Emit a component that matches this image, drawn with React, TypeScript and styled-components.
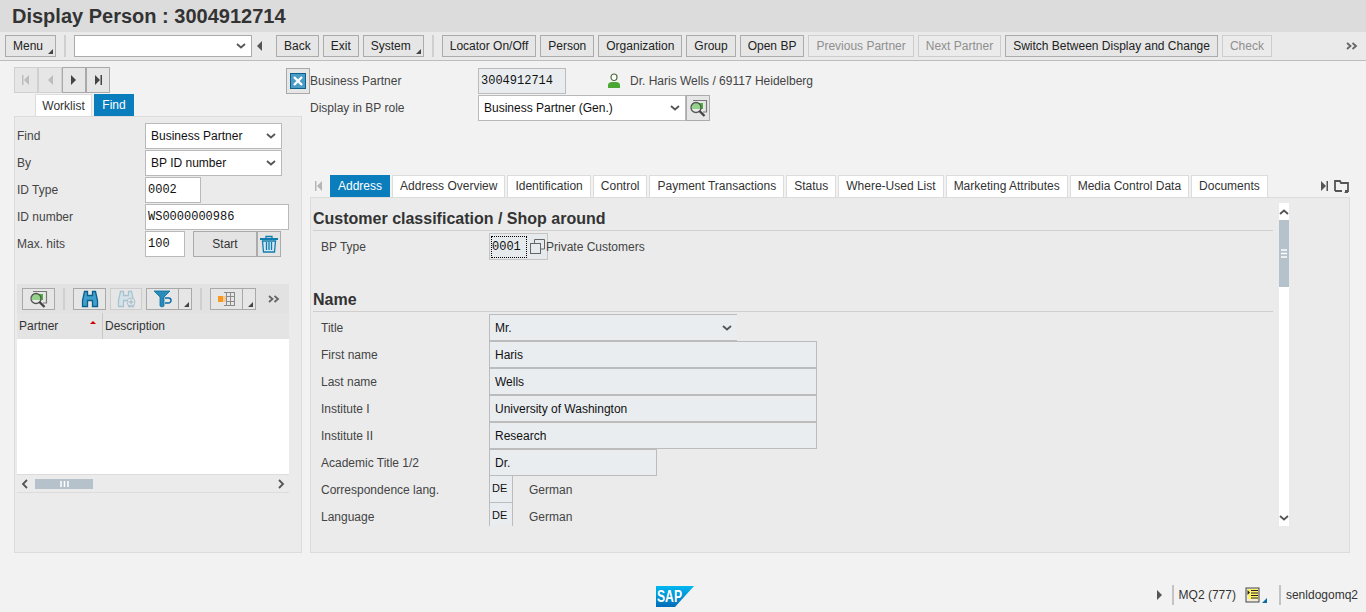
import React from "react";
import styled, { createGlobalStyle, css } from "styled-components";

const GlobalStyle = createGlobalStyle`
  html, body { margin: 0; padding: 0; height: 100%; overflow: hidden; background: #f2f2f2; }
  body { font-family: "Liberation Sans", Arial, sans-serif; font-size: 12px; color: #333; }
`;

const toolbarButtons = [
  { label: "Back" },
  { label: "Exit" },
  { label: "System", menu: true },
];
const appButtons = [
  { label: "Locator On/Off" },
  { label: "Person" },
  { label: "Organization" },
  { label: "Group" },
  { label: "Open BP" },
  { label: "Previous Partner", disabled: true },
  { label: "Next Partner", disabled: true },
  { label: "Switch Between Display and Change" },
  { label: "Check", disabled: true },
];
const tabs = [
  "Address",
  "Address Overview",
  "Identification",
  "Control",
  "Payment Transactions",
  "Status",
  "Where-Used List",
  "Marketing Attributes",
  "Media Control Data",
  "Documents",
];
const nameRows = [
  { label: "First name", value: "Haris", width: 328 },
  { label: "Last name", value: "Wells", width: 328 },
  { label: "Institute I", value: "University of Washington", width: 328 },
  { label: "Institute II", value: "Research", width: 328 },
  { label: "Academic Title 1/2", value: "Dr.", width: 168 },
];

const Chevron = () => (
  <svg width="10" height="6" viewBox="0 0 10 6">
    <path d="M1 1l4 3.500L9 1" fill="none" stroke="#555" strokeWidth="1.800" />
  </svg>
);

const SideChevron = ({ left }: { left?: boolean }) => (
  <svg width="10" height="10" viewBox="0 0 10 10">
    <path d={left ? "M7 1L3 5l4 4" : "M3 1l4 4-4 4"} fill="none" stroke="#555" strokeWidth="1.800" />
  </svg>
);

const DoubleChevron = () => (
  <svg width="13" height="8" viewBox="0 0 13 8">
    <path d="M1 1l3.500 3L1 7M6.500 1L10 4 6.500 7" fill="none" stroke="#666" strokeWidth="1.800" />
  </svg>
);

const SearchListIcon = () => (
  <svg width="19" height="18" viewBox="0 0 19 18">
    <path d="M4 1.500h13.500V13H14" fill="none" stroke="#777" strokeWidth="1.200" />
    <rect x="3" y="4" width="11" height="6" fill="#46b53a" />
    <circle cx="7" cy="8.500" r="5" fill="#f4f7f2" fillOpacity="0.45" stroke="#555" strokeWidth="1.300" />
    <path d="M10.500 12l5 5" stroke="#444" strokeWidth="2.400" />
  </svg>
);

const BinocularsIcon = ({ faded }: { faded?: boolean }) => {
  const line = faded ? "#a9c3d1" : "#0a5f8c";
  const fill = faded ? "#d5e2ea" : "#3f9fcb";
  return (
    <svg width="20" height="18" viewBox="0 0 20 18">
      <path
        d="M4.500 1.500h3v4h5v-4h3l2 9v6h-5v-6h-5v6h-5v-6z"
        fill={fill}
        stroke={line}
        strokeWidth="1.300"
      />
      {faded && (
        <>
          <circle cx="15" cy="12" r="4" fill="#e6e6e6" stroke={line} />
          <path d="M12.500 12h5M15 9.500v5" stroke={line} strokeWidth="1.400" />
        </>
      )}
    </svg>
  );
};

const FilterIcon = () => (
  <svg width="20" height="18" viewBox="0 0 20 18">
    <path d="M1 1h16l-6 6v9l-2 1-2-1V7z" fill="#2a8ab8" stroke="#0a6ea5" strokeWidth=".8" />
    <path d="M12 8h3.500a2 2 0 010 5H12" fill="none" stroke="#0a6ea5" strokeWidth="1.500" />
  </svg>
);

const LayoutIcon = () => (
  <svg width="18" height="16" viewBox="0 0 18 16">
    <path d="M6 1.500h11M6 5.500h11M6 10.500h11M6 14.500h11M8.500 1v14M12.500 1v14M16.500 1v14" stroke="#8a8a8a" strokeWidth="1" fill="none" />
    <rect x="0" y="5" width="5" height="6" fill="#f59a1f" />
    <rect x="5" y="5" width="3" height="6" fill="#f6c79b" />
  </svg>
);

const TrashIcon = () => (
  <svg width="20" height="18" viewBox="0 0 20 18">
    <path d="M1 4h18" stroke="#0f7dae" strokeWidth="2" />
    <path d="M7 3.500V1.500h6v2" fill="none" stroke="#0f7dae" strokeWidth="1.300" />
    <path d="M3.500 6l1 11h11l1-11z" fill="#d5e8f1" stroke="#0f7dae" strokeWidth="1.300" />
    <path d="M7.500 7v8M10 7v8M12.500 7v8" stroke="#0f7dae" strokeWidth="1.300" />
  </svg>
);

const PersonIcon = () => (
  <svg width="14" height="16" viewBox="0 0 14 16">
    <path d="M4 4a3 3 0 016 0c0 2-1 3.500-3 3.500S4 6 4 4z" fill="#fff" stroke="#4a6a3a" strokeWidth="1.200" />
    <path d="M1 15v-3c0-2 2-3 4-3h4c2 0 4 1 4 3v3z" fill="#4aa832" />
  </svg>
);

const CopyIcon = () => (
  <svg width="15" height="15" viewBox="0 0 15 15">
    <path d="M4.500 4V.500h10v9.500H11" fill="none" stroke="#666" strokeWidth="1" />
    <rect x=".5" y="4.500" width="10" height="10" fill="none" stroke="#666" strokeWidth="1" />
  </svg>
);

const FolderIcon = () => (
  <svg width="15" height="14" viewBox="0 0 15 14">
    <path d="M1 12V2h5l1 2h7v8h-3M1 12h7" fill="none" stroke="#555" strokeWidth="1.800" />
    <path d="M14 14h-4l4-4z" fill="#555" />
  </svg>
);

const CollapseIcon = () => (
  <svg width="16" height="16" viewBox="0 0 16 16">
    <rect x=".5" y=".5" width="15" height="15" fill="#4b9cc4" stroke="#0a5f8c" />
    <path d="M4 4l8 8M12 4l-8 8" stroke="#fff" strokeWidth="2.400" />
  </svg>
);

const SapLogo = () => (
  <svg width="38" height="21" viewBox="0 0 38 21">
    <defs>
      <linearGradient id="sapBlue" x1="0" y1="0" x2="0" y2="1">
        <stop offset="0" stopColor="#00b8f1" />
        <stop offset="1" stopColor="#006cb8" />
      </linearGradient>
    </defs>
    <path d="M0 0h38L19 21H0z" fill="url(#sapBlue)" />
    <text
      x="1"
      y="16"
      fill="#fff"
      fontFamily="Liberation Sans"
      fontWeight="700"
      fontSize="16"
      textLength="25"
      lengthAdjust="spacingAndGlyphs"
    >
      SAP
    </text>
  </svg>
);

const Page = styled.div`
  width: 1366px;
  height: 612px;
  display: flex;
  flex-direction: column;
  overflow: hidden;
  background: #f2f2f2;
`;

const TitleBar = styled.div`
  height: 32px;
  flex: none;
  background: #dcdcdc;
  padding-left: 12px;
  font-size: 20px;
  font-weight: 700;
  line-height: 32px;
  color: #333;
`;

const Toolbar = styled.div`
  height: 29px;
  flex: none;
  box-sizing: border-box;
  display: flex;
  align-items: center;
  gap: 4px;
  padding: 0 5px 1px;
  background: #eaeaea;
  border-bottom: 1px solid #bdbdbd;
`;

const Button = styled.button<{ $disabled?: boolean; $menu?: boolean }>`
  position: relative;
  height: 22px;
  padding: ${(p) => (p.$menu ? "0 12px 0 7px" : "0 7px")};
  font: 12px "Liberation Sans", Arial, sans-serif;
  background: #e6e6e6;
  border: 1px solid #ababab;
  color: ${(p) => (p.$disabled ? "#8f8f8f" : "#222")};
  white-space: nowrap;
  ${(p) =>
    p.$disabled &&
    css`
      border-color: #cdcdcd;
      background: #ebebeb;
    `}
  ${(p) =>
    p.$menu &&
    css`
      &::after {
        content: "";
        position: absolute;
        right: 2px;
        bottom: 2px;
        border-left: 5px solid transparent;
        border-bottom: 5px solid #444;
      }
    `}
`;

const Separator = styled.div`
  width: 2px;
  height: 22px;
  background: #cfcfcf;
  margin: 0 4px;
`;

const CommandBox = styled.div`
  width: 178px;
  height: 22px;
  box-sizing: border-box;
  display: flex;
  align-items: center;
  justify-content: flex-end;
  padding-right: 5px;
  background: #fff;
  border: 1px solid #ababab;
`;

const BackArrow = styled.div`
  width: 0;
  height: 0;
  border-top: 5px solid transparent;
  border-bottom: 5px solid transparent;
  border-right: 5px solid #555;
  margin: 0 10px 0 1px;
`;

const ToolbarEnd = styled.div`
  margin-left: auto;
  margin-right: 2px;
  display: flex;
`;

const Main = styled.div`
  flex: 1;
  min-height: 0;
  display: flex;
  padding-left: 14px;
`;

const LeftColumn = styled.div`
  width: 288px;
  flex: none;
  display: flex;
  flex-direction: column;
  padding-top: 6px;
`;

const NavButtons = styled.div`
  display: flex;
  flex: none;
  height: 27px;
`;

const NavButton = styled.div<{ $disabled?: boolean }>`
  width: 24px;
  height: 26px;
  box-sizing: border-box;
  border: 1px solid ${(p) => (p.$disabled ? "#d0d0d0" : "#a9a9a9")};
  background: #e6e6e6;
  display: flex;
  align-items: center;
  justify-content: center;
`;

const NavGlyph = styled.svg`
  display: block;
`;

const SideTabs = styled.div`
  display: flex;
  flex: none;
  margin-left: 21px;
  gap: 2px;
  height: 22px;
`;

const SideTab = styled.div<{ $active?: boolean }>`
  height: 22px;
  line-height: 22px;
  box-sizing: border-box;
  background: ${(p) => (p.$active ? "#0a7dbd" : "#fff")};
  color: ${(p) => (p.$active ? "#fff" : "#333")};
  border: ${(p) => (p.$active ? "none" : "1px solid #dcdcdc")};
  border-bottom: none;
  width: ${(p) => (p.$active ? "40px" : "57px")};
  text-align: center;
`;

const SidePanel = styled.div`
  height: 437px;
  flex: none;
  box-sizing: border-box;
  background: #ebebeb;
  border: 1px solid #dcdcdc;
  padding: 6px 2px 0;
`;

const FormGrid = styled.div`
  display: grid;
  grid-template-columns: 128px 1fr;
  grid-auto-rows: 26px;
  row-gap: 1px;
`;

const FieldLabel = styled.div`
  line-height: 26px;
  color: #444;
`;

const Select = styled.div<{ $width: number }>`
  width: ${(p) => p.$width}px;
  height: 26px;
  box-sizing: border-box;
  display: flex;
  align-items: center;
  justify-content: space-between;
  padding: 0 5px;
  background: #fff;
  border: 1px solid #b9b9b9;
  color: #111;
`;

const TextField = styled.div<{ $width: number }>`
  width: ${(p) => p.$width}px;
  height: 26px;
  box-sizing: border-box;
  padding-left: 2px;
  line-height: 24px;
  background: #fff;
  border: 1px solid #b9b9b9;
  font-family: "Liberation Mono", monospace;
  font-size: 12px;
  color: #111;
`;

const StartRow = styled.div`
  display: flex;
`;

const StartButton = styled.div`
  margin-left: 8px;
  width: 64px;
  height: 26px;
  box-sizing: border-box;
  line-height: 24px;
  text-align: center;
  background: #e4e4e4;
  border: 1px solid #ababab;
`;

const TrashButton = styled.div`
  width: 24px;
  height: 26px;
  box-sizing: border-box;
  display: flex;
  align-items: center;
  justify-content: center;
  background: #e4e4e4;
  border: 1px solid #ababab;
`;

const ResultList = styled.div`
  margin-top: 27px;
  width: 272px;
`;

const ListToolbar = styled.div`
  height: 29px;
  display: flex;
  align-items: center;
  padding-left: 5px;
  background: #e2e2e2;
`;

const IconButton = styled.div<{ $width?: number; $disabled?: boolean; $menu?: boolean; $spaced?: boolean }>`
  position: relative;
  width: ${(p) => p.$width ?? 33}px;
  height: 22px;
  box-sizing: border-box;
  display: flex;
  align-items: center;
  justify-content: center;
  background: #e6e6e6;
  margin-left: ${(p) => (p.$spaced ? "4px" : "0")};
  border: 1px solid ${(p) => (p.$disabled ? "#cdcdcd" : "#a9a9a9")};
  ${(p) =>
    p.$menu &&
    css`
      border-left: none;
      &::after {
        content: "";
        position: absolute;
        right: 2px;
        bottom: 2px;
        border-left: 5px solid transparent;
        border-bottom: 5px solid #444;
      }
    `}
`;

const ListSeparator = styled.div`
  width: 2px;
  height: 22px;
  background: #cfcfcf;
  margin: 0 8px;
`;

const ListEnd = styled(ToolbarEnd)`
  margin-right: 8px;
`;

const ListHeader = styled.div`
  height: 26px;
  display: flex;
  background: #e4e4e4;
  color: #333;
  line-height: 26px;
`;

const HeaderCell = styled.div<{ $width: number }>`
  position: relative;
  width: ${(p) => p.$width}px;
  padding-left: 2px;
  box-sizing: border-box;
  &:first-child {
    border-right: 1px solid #c8c8c8;
  }
`;

const SortMark = styled.span`
  position: absolute;
  right: 6px;
  top: 8px;
  border-left: 3px solid transparent;
  border-right: 3px solid transparent;
  border-bottom: 3px solid #cc0000;
`;

const ListBody = styled.div`
  height: 135px;
  background: #fff;
  border-bottom: 1px solid #dcdcdc;
`;

const HScroll = styled.div`
  height: 17px;
  display: flex;
  align-items: center;
  padding: 0 3px;
  border-bottom: 1px solid #dcdcdc;
`;

const HThumb = styled.div`
  width: 58px;
  height: 10px;
  margin-left: 5px;
  margin-right: auto;
  background: #b5c2cc;
  display: flex;
  align-items: center;
  justify-content: center;
`;

const RightColumn = styled.div`
  margin-left: 8px;
  width: 1040px;
  flex: none;
  display: flex;
  flex-direction: column;
  padding-top: 6px;
`;

const HeaderArea = styled.div`
  height: 107px;
  flex: none;
`;

const HeaderRow = styled.div`
  display: flex;
  align-items: center;
  height: 27px;
`;

const CollapseButton = styled.div`
  width: 24px;
  height: 26px;
  margin-left: -24px;
  box-sizing: border-box;
  display: flex;
  align-items: center;
  justify-content: center;
  background: #e6e6e6;
  border: 1px solid #a9a9a9;
`;

const HeaderLabel = styled.div`
  width: 168px;
  color: #444;
`;

const ReadField = styled.div`
  width: 88px;
  height: 26px;
  box-sizing: border-box;
  line-height: 24px;
  padding-left: 2px;
  background: #e9edf0;
  border: 1px solid #bcbcbc;
  font-family: "Liberation Mono", monospace;
  color: #111;
`;

const PartnerName = styled.div`
  display: flex;
  align-items: center;
  gap: 9px;
  margin-left: 41px;
  color: #444;
`;

const RoleButton = styled.div`
  width: 24px;
  height: 26px;
  box-sizing: border-box;
  display: flex;
  align-items: center;
  justify-content: center;
  background: #e6e6e6;
  border: 1px solid #ababab;
`;

const TabStrip = styled.div`
  height: 23px;
  flex: none;
  display: flex;
  align-items: flex-end;
  gap: 2px;
`;

const TabArrow = styled.div`
  width: 18px;
  height: 22px;
  display: flex;
  align-items: center;
  justify-content: center;
`;

const Tab = styled.div<{ $active?: boolean }>`
  height: 22px;
  box-sizing: border-box;
  padding: 0 ${(p) => (p.$active ? 8 : 7)}px;
  line-height: ${(p) => (p.$active ? 22 : 20)}px;
  white-space: nowrap;
  background: ${(p) => (p.$active ? "#0a7dbd" : "#fff")};
  color: ${(p) => (p.$active ? "#fff" : "#333")};
  border: ${(p) => (p.$active ? "none" : "1px solid #dcdcdc")};
  border-bottom: none;
`;

const TabEnd = styled.div`
  margin-left: auto;
  height: 22px;
  display: flex;
  align-items: center;
  gap: 5px;
  padding-right: 1px;
`;

const ContentPanel = styled.div`
  height: 356px;
  flex: none;
  box-sizing: border-box;
  background: #ebebeb;
  border: 1px solid #dcdcdc;
  padding: 5px 60px 26px 2px;
  display: flex;
`;

const ContentScroll = styled.div`
  flex: 1;
  min-width: 0;
  overflow: hidden;
`;

const SectionTitle = styled.div<{ $gap?: boolean }>`
  height: 28px;
  box-sizing: border-box;
  font-size: 16px;
  font-weight: 700;
  line-height: 20px;
  padding-top: 6px;
  color: #333;
  border-bottom: 1px solid #cfcfcf;
  margin: ${(p) => (p.$gap ? "24px" : "0")} 6px 2px 0;
`;

const Row = styled.div`
  height: 27px;
  display: flex;
  align-items: center;
  padding-left: 8px;
`;

const RowLabel = styled.div`
  width: 168px;
  flex: none;
  color: #444;
`;

const TypeField = styled.div`
  width: 59px;
  height: 27px;
  box-sizing: border-box;
  display: flex;
  align-items: center;
  background: #e6eaed;
  border: 1px solid #c4c4c4;
  justify-content: space-between;
  padding: 0 2px 0 1px;
  margin-right: -2px;
`;

const FocusedValue = styled.div`
  width: 36px;
  height: 22px;
  box-sizing: border-box;
  line-height: 20px;
  border: 1px dotted #000;
  font-family: "Liberation Mono", monospace;
  color: #111;
`;

const DisplayField = styled.div<{ $width: number }>`
  width: ${(p) => p.$width}px;
  height: 27px;
  box-sizing: border-box;
  padding: 0 5px;
  background: #e9edf0;
  border: 1px solid #bcbcbc;
  color: #111;
  display: flex;
  align-items: center;
  justify-content: space-between;
`;

const TitleField = styled(DisplayField)`
  border-right: none;
`;

const LangCode = styled.div`
  width: 24px;
  height: 27px;
  box-sizing: border-box;
  padding-left: 2px;
  line-height: 25px;
  background: #e9edf0;
  border: 1px solid #bcbcbc;
  border-top: none;
  font-size: 11px;
  color: #111;
`;

const LangName = styled.div<{ $tight?: boolean }>`
  margin-left: ${(p) => (p.$tight ? 0 : 16)}px;
  color: #444;
`;

const VScroll = styled.div`
  width: 10px;
  flex: none;
  background: #fff;
  display: flex;
  flex-direction: column;
  align-items: center;
`;

const VArrow = styled.div`
  height: 17px;
  display: flex;
  align-items: center;
`;

const VThumb = styled.div`
  width: 10px;
  height: 67px;
  background: #b5c2cc;
  display: flex;
  align-items: center;
  justify-content: center;
`;

const VSpacer = styled.div`
  flex: 1;
`;

const Footer = styled.div`
  height: 59px;
  flex: none;
  display: flex;
  align-items: flex-end;
  padding: 0 8px 5px 656px;
`;

const StatusArea = styled.div`
  margin: 0 0 2px auto;
  display: flex;
  align-items: center;
  height: 20px;
  color: #333;
`;

const StatusDivider = styled.div<{ $before?: number }>`
  width: 2px;
  height: 20px;
  background: #c4c4c4;
  margin: 0 5px 0 ${(p) => p.$before ?? 5}px;
`;

const StatusIcon = styled.div`
  position: relative;
  width: 22px;
  height: 16px;
  margin: 0 7px 0 9px;
  display: flex;
  &::after {
    content: "";
    position: absolute;
    right: 0;
    bottom: 0;
    border-left: 5px solid transparent;
    border-bottom: 5px solid #0a6ea5;
  }
`;

const LogoSlot = styled.div`
  display: flex;
`;

const Arrow = ({ dir, bar, color }: { dir: "l" | "r"; bar?: boolean; color: string }) => (
  <NavGlyph width="10" height="12" viewBox="0 0 10 12">
    {dir === "l" ? <path d="M8 1v10L3 6z" fill={color} /> : <path d="M2 1v10l5-5z" fill={color} />}
    {bar &&
      (dir === "l" ? (
        <rect x="1" y="1" width="1.500" height="10" fill={color} />
      ) : (
        <rect x="7.500" y="1" width="1.500" height="10" fill={color} />
      ))}
  </NavGlyph>
);

const App: React.FC = () => {
  return (
    <>
      <GlobalStyle />
      <Page>
        <TitleBar>Display Person : 3004912714</TitleBar>
        <Toolbar>
          <Button $menu>Menu</Button>
          <Separator />
          <CommandBox>
            <Chevron />
          </CommandBox>
          <BackArrow />
          {toolbarButtons.map((b) => (
            <Button key={b.label} $menu={b.menu}>
              {b.label}
            </Button>
          ))}
          <Separator />
          {appButtons.map((b) => (
            <Button key={b.label} $disabled={b.disabled}>
              {b.label}
            </Button>
          ))}
          <ToolbarEnd>
            <DoubleChevron />
          </ToolbarEnd>
        </Toolbar>

        <Main>
          <LeftColumn>
            <NavButtons>
              <NavButton $disabled>
                <Arrow dir="l" bar color="#bdbdbd" />
              </NavButton>
              <NavButton $disabled>
                <Arrow dir="l" color="#bdbdbd" />
              </NavButton>
              <NavButton>
                <Arrow dir="r" color="#444" />
              </NavButton>
              <NavButton>
                <Arrow dir="r" bar color="#444" />
              </NavButton>
            </NavButtons>
            <SideTabs>
              <SideTab>Worklist</SideTab>
              <SideTab $active>Find</SideTab>
            </SideTabs>
            <SidePanel>
              <FormGrid>
                <FieldLabel>Find</FieldLabel>
                <Select $width={137}>
                  Business Partner
                  <Chevron />
                </Select>
                <FieldLabel>By</FieldLabel>
                <Select $width={137}>
                  BP ID number
                  <Chevron />
                </Select>
                <FieldLabel>ID Type</FieldLabel>
                <TextField $width={56}>0002</TextField>
                <FieldLabel>ID number</FieldLabel>
                <TextField $width={144}>WS0000000986</TextField>
                <FieldLabel>Max. hits</FieldLabel>
                <StartRow>
                  <TextField $width={40}>100</TextField>
                  <StartButton>Start</StartButton>
                  <TrashButton>
                    <TrashIcon />
                  </TrashButton>
                </StartRow>
              </FormGrid>

              <ResultList>
                <ListToolbar>
                  <IconButton>
                    <SearchListIcon />
                  </IconButton>
                  <ListSeparator />
                  <IconButton>
                    <BinocularsIcon />
                  </IconButton>
                  <IconButton $disabled $spaced $width={32}>
                    <BinocularsIcon faded />
                  </IconButton>
                  <IconButton $spaced>
                    <FilterIcon />
                  </IconButton>
                  <IconButton $width={13} $menu />
                  <ListSeparator />
                  <IconButton>
                    <LayoutIcon />
                  </IconButton>
                  <IconButton $width={13} $menu />
                  <ListEnd>
                    <DoubleChevron />
                  </ListEnd>
                </ListToolbar>
                <ListHeader>
                  <HeaderCell $width={86}>
                    Partner
                    <SortMark />
                  </HeaderCell>
                  <HeaderCell $width={186}>Description</HeaderCell>
                </ListHeader>
                <ListBody />
                <HScroll>
                  <SideChevron left />
                  <HThumb>
                    <svg width="9" height="6" viewBox="0 0 9 6">
                      <path d="M1 0v6M4.500 0v6M8 0v6" stroke="#fff" strokeWidth="1.500" />
                    </svg>
                  </HThumb>
                  <SideChevron />
                </HScroll>
              </ResultList>
            </SidePanel>
          </LeftColumn>

          <RightColumn>
            <HeaderArea>
              <HeaderRow>
                <CollapseButton>
                  <CollapseIcon />
                </CollapseButton>
                <HeaderLabel>Business Partner</HeaderLabel>
                <ReadField>3004912714</ReadField>
                <PartnerName>
                  <PersonIcon />
                  Dr. Haris Wells / 69117 Heidelberg
                </PartnerName>
              </HeaderRow>
              <HeaderRow>
                <HeaderLabel>Display in BP role</HeaderLabel>
                <Select $width={208}>
                  Business Partner (Gen.)
                  <Chevron />
                </Select>
                <RoleButton>
                  <SearchListIcon />
                </RoleButton>
              </HeaderRow>
            </HeaderArea>

            <TabStrip>
              <TabArrow>
                <Arrow dir="l" bar color="#b5b5b5" />
              </TabArrow>
              {tabs.map((t, i) => (
                <Tab key={t} $active={i === 0}>
                  {t}
                </Tab>
              ))}
              <TabEnd>
                <Arrow dir="r" bar color="#555" />
                <FolderIcon />
              </TabEnd>
            </TabStrip>

            <ContentPanel>
              <ContentScroll>
                <SectionTitle>Customer classification / Shop around</SectionTitle>
                <Row>
                  <RowLabel>BP Type</RowLabel>
                  <TypeField>
                    <FocusedValue>0001</FocusedValue>
                    <CopyIcon />
                  </TypeField>
                  <LangName $tight>Private Customers</LangName>
                </Row>
                <SectionTitle $gap>Name</SectionTitle>
                <Row>
                  <RowLabel>Title</RowLabel>
                  <TitleField $width={248}>
                    Mr.
                    <Chevron />
                  </TitleField>
                </Row>
                {nameRows.map((r) => (
                  <Row key={r.label}>
                    <RowLabel>{r.label}</RowLabel>
                    <DisplayField $width={r.width}>{r.value}</DisplayField>
                  </Row>
                ))}
                <Row>
                  <RowLabel>Correspondence lang.</RowLabel>
                  <LangCode>DE</LangCode>
                  <LangName>German</LangName>
                </Row>
                <Row>
                  <RowLabel>Language</RowLabel>
                  <LangCode>DE</LangCode>
                  <LangName>German</LangName>
                </Row>
              </ContentScroll>
              <VScroll>
                <VArrow>
                  <svg width="10" height="6" viewBox="0 0 10 6">
                    <path d="M1 5l4-3.500L9 5" fill="none" stroke="#555" strokeWidth="1.800" />
                  </svg>
                </VArrow>
                <VThumb>
                  <svg width="6" height="9" viewBox="0 0 6 9">
                    <path d="M0 1h6M0 4.500h6M0 8h6" stroke="#fff" strokeWidth="1.500" />
                  </svg>
                </VThumb>
                <VSpacer />
                <VArrow>
                  <Chevron />
                </VArrow>
              </VScroll>
            </ContentPanel>
          </RightColumn>
        </Main>

        <Footer>
          <LogoSlot>
            <SapLogo />
          </LogoSlot>
          <StatusArea>
            <Arrow dir="r" color="#555" />
            <StatusDivider $before={7} />
            MQ2 (777)
            <StatusIcon>
              <svg width="15" height="16" viewBox="0 0 15 16">
                <rect x="1" y="1" width="13" height="14" fill="#f0ecd8" stroke="#444" />
                <rect x="3" y="2" width="10" height="10" fill="#fff36a" />
                <path d="M6 3.500h7M6 6h7M6 8.500h7M6 11h7" stroke="#222" />
                <path d="M2.500 3v5l2.500-2.500z" fill="#222" />
              </svg>
            </StatusIcon>
            <StatusDivider />
            senldogomq2
          </StatusArea>
        </Footer>
      </Page>
    </>
  );
};

export default App;
